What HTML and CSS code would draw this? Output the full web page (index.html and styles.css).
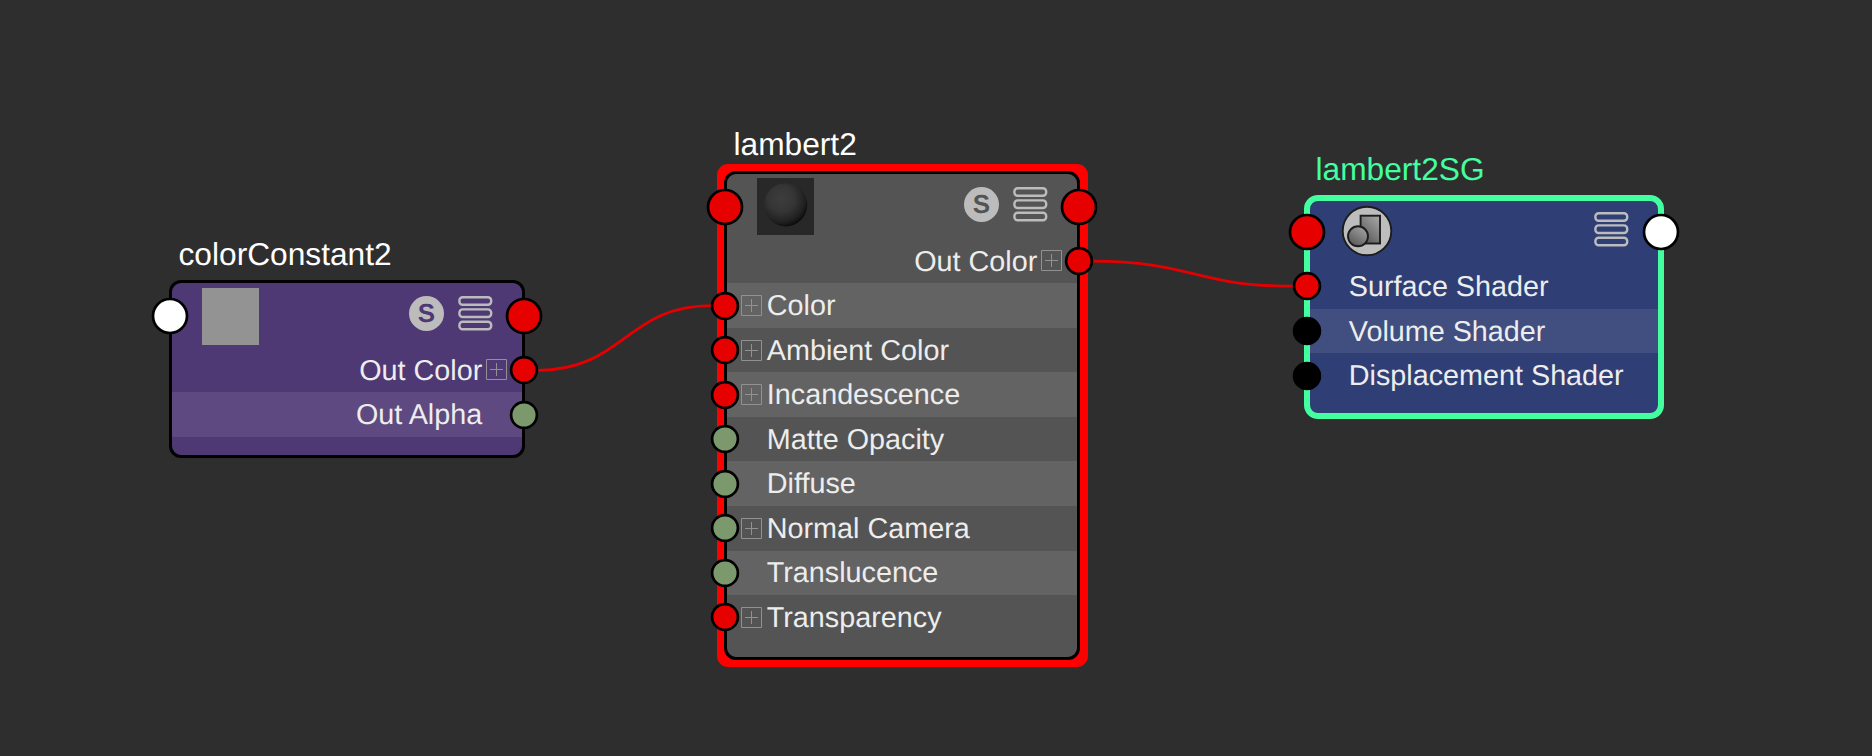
FILE: index.html
```
<!DOCTYPE html>
<html lang="en">
<head>
<meta charset="utf-8">
<title>Node Editor</title>
<link rel="stylesheet" href="styles.css">
</head>
<body>
<svg class="defs" width="0" height="0" aria-hidden="true">
  <defs>
    <radialGradient id="ball" cx="0.4" cy="0.36" r="0.68">
      <stop offset="0" stop-color="#3d3d3d"/>
      <stop offset="0.45" stop-color="#353535"/>
      <stop offset="0.8" stop-color="#202020"/>
      <stop offset="1" stop-color="#080808"/>
    </radialGradient>
    <linearGradient id="metal" x1="0.9" y1="0" x2="0.2" y2="1">
      <stop offset="0" stop-color="#a8a8a8"/>
      <stop offset="1" stop-color="#555"/>
    </linearGradient>
    <symbol id="bars" viewBox="0 0 35 35">
      <g fill="none" stroke="#bcbcbc" stroke-width="2.4">
        <rect x="1.4" y="1.2" width="31.8" height="7.6" rx="3.3"/>
        <rect x="1.4" y="13.4" width="31.8" height="7.6" rx="3.3"/>
        <rect x="1.4" y="25.7" width="31.8" height="7.6" rx="3.3"/>
      </g>
    </symbol>
    <symbol id="plus" viewBox="0 0 21 21">
      <path d="M.5 .5h20v20H.5zM4 10.5h13M10.5 4v13" fill="none" stroke="currentColor"/>
    </symbol>
    <symbol id="port" viewBox="0 0 30 30">
      <circle cx="15" cy="15" r="12.9" fill="currentColor" stroke="#000" stroke-width="2.7"/>
    </symbol>
    <symbol id="port-big" viewBox="0 0 38 38">
      <circle cx="19" cy="19" r="17" fill="currentColor" stroke="#000" stroke-width="2.7"/>
    </symbol>
  </defs>
</svg>
<main class="canvas">
  <svg class="wires" width="1872" height="756">
    <path d="M524 370.3H537C625 370.3 625 305.6 712 305.6H725"/>
    <path d="M1079 261.2H1092C1193 261.2 1193 286.2 1294 286.2H1307"/>
  </svg>

  <section class="node constant">
    <h2 class="title">colorConstant2</h2>
    <div class="box">
      <header class="head">
        <svg class="port big left white"><use href="#port-big"/></svg>
        <span class="swatch flat"></span>
        <span class="solo">S</span>
        <svg class="bars"><use href="#bars"/></svg>
        <svg class="port big right red"><use href="#port-big"/></svg>
      </header>
      <div class="row out"><span>Out Color</span><svg class="plus"><use href="#plus"/></svg><svg class="port right red"><use href="#port"/></svg></div>
      <div class="row out alt"><span>Out Alpha</span><svg class="port right green"><use href="#port"/></svg></div>
    </div>
  </section>

  <section class="node material">
    <h2 class="title">lambert2</h2>
    <div class="box">
      <header class="head">
        <svg class="port big left red"><use href="#port-big"/></svg>
        <svg class="swatch" viewBox="0 0 57 57"><rect width="57" height="57" fill="#282828"/><circle cx="28.7" cy="26.8" r="21.6" fill="url(#ball)"/></svg>
        <span class="solo">S</span>
        <svg class="bars"><use href="#bars"/></svg>
        <svg class="port big right red"><use href="#port-big"/></svg>
      </header>
      <div class="row out"><span>Out Color</span><svg class="plus"><use href="#plus"/></svg><svg class="port right red"><use href="#port"/></svg></div>
      <div class="row alt"><svg class="port left red"><use href="#port"/></svg><svg class="plus"><use href="#plus"/></svg><span>Color</span></div>
      <div class="row"><svg class="port left red"><use href="#port"/></svg><svg class="plus"><use href="#plus"/></svg><span>Ambient Color</span></div>
      <div class="row alt"><svg class="port left red"><use href="#port"/></svg><svg class="plus"><use href="#plus"/></svg><span>Incandescence</span></div>
      <div class="row"><svg class="port left green"><use href="#port"/></svg><span>Matte Opacity</span></div>
      <div class="row alt"><svg class="port left green"><use href="#port"/></svg><span>Diffuse</span></div>
      <div class="row"><svg class="port left green"><use href="#port"/></svg><svg class="plus"><use href="#plus"/></svg><span>Normal Camera</span></div>
      <div class="row alt"><svg class="port left green"><use href="#port"/></svg><span>Translucence</span></div>
      <div class="row"><svg class="port left red"><use href="#port"/></svg><svg class="plus"><use href="#plus"/></svg><span>Transparency</span></div>
    </div>
  </section>

  <section class="node group">
    <h2 class="title">lambert2SG</h2>
    <div class="box">
      <header class="head">
        <svg class="port big left red"><use href="#port-big"/></svg>
        <svg class="emblem" viewBox="0 0 52 52">
          <g stroke="#1c1c1c" stroke-width="1.9">
            <circle cx="26" cy="26" r="24.3" fill="#bdbdbd"/>
            <rect x="19.6" y="10.7" width="19.4" height="27.8" fill="url(#metal)"/>
            <circle cx="17" cy="31.3" r="10" fill="url(#metal)"/>
          </g>
        </svg>
        <svg class="bars"><use href="#bars"/></svg>
        <svg class="port big right white"><use href="#port-big"/></svg>
      </header>
      <div class="row"><svg class="port left red"><use href="#port"/></svg><span>Surface Shader</span></div>
      <div class="row alt"><svg class="port left black"><use href="#port"/></svg><span>Volume Shader</span></div>
      <div class="row"><svg class="port left black"><use href="#port"/></svg><span>Displacement Shader</span></div>
    </div>
  </section>
</main>
</body>
</html>
```
FILE: styles.css
```
body {
  margin: 0;
  background: #2e2e2e;
  font-family: "Liberation Sans", Arial, sans-serif;
  text-rendering: geometricPrecision;
}

.defs { position: absolute; }

.canvas {
  position: relative;
  width: 1872px;
  height: 756px;
  overflow: hidden;
}

.wires {
  position: absolute;
  inset: 0;
  fill: none;
  stroke: #e40000;
  stroke-width: 2.8;
}

/* Nodes sit freely on the canvas; --edge is the frame thickness. */
.node {
  --edge: 3px;
  --half: 1.5px;
  position: absolute;
  width: 356px;
}
.constant { left: 169px; top: 234px; }
.material { left: 724px; top: 125px; }
.group { --edge: 6px; --half: 3px; left: 1304px; top: 149px; width: 360px; }

.title {
  margin: 0;
  padding-left: 9.5px;
  height: 46px;
  line-height: 40px;
  font-size: 31.7px;
  font-weight: 400;
  color: #fff;
  white-space: nowrap;
}
.material .title { line-height: 38px; }
.group .title { color: #43ff9f; padding-left: 11.5px; }

.box {
  box-sizing: border-box;
  border: var(--edge) solid #000;
  border-radius: 12px;
}
.constant .box { height: 178px; background: #4e3974; }
.material .box {
  position: relative;
  height: 489px;
  background: #545454;
}
/* Selection halo, squarer than the frame it surrounds. */
.material .box::before {
  content: "";
  position: absolute;
  z-index: -1;
  inset: -10px -10.6px -10px -10.3px;
  border-radius: 11px;
  background: #f00;
}
.group .box { height: 224px; background: #2f3f75; border-color: #43ff9f; border-radius: 14px; }

.head, .row {
  position: relative;
  display: flex;
  box-sizing: border-box;
}

.head {
  height: calc(66.2px - var(--half));
  padding: calc(6px - var(--half)) calc(30.7px - var(--half)) 0 calc(31.7px - var(--half));
}
.group .head { padding-right: 28.7px; }
.swatch { width: 57px; height: 57px; }
.material .swatch { margin-top: -0.5px; }
.swatch.flat { background: #939393; }

.solo {
  margin: 8px 14px 0 auto;
  width: 35px;
  height: 35px;
  border-radius: 50%;
  background: #bcbcbc;
  color: #4e3974;
  font-size: 26px;
  line-height: 35px;
  font-weight: 700;
  text-align: center;
}
.material .solo { color: #545454; }
.bars { margin-top: 8px; width: 35px; height: 35px; }
.emblem { margin-left: 2.5px; margin-top: 1.2px; width: 52px; height: 52px; }
.emblem + .bars { margin-left: auto; margin-top: 7.5px; }

.row {
  height: 44.55px;
  align-items: center;
  padding: 0 calc(41.3px - var(--half));
  font-size: 28.75px;
  line-height: 43px;
  color: #ededed;
  white-space: nowrap;
}
.row span { padding-top: 2.4px; }
.row.out { justify-content: flex-end; }
.group .row { padding-left: 38.8px; }
.plus { width: 21px; height: 21px; color: #919191; }
.row .plus { margin-left: -26px; margin-right: 5px; }
.row.out .plus { margin-left: 3.5px; margin-right: -24.5px; }

.constant .alt { background: #5e4a81; }
.material .alt { background: #636363; }
.group .alt { background: #404f80; }

/* Ports straddle the frame line. */
.port {
  position: absolute;
  top: 7.3px;
  width: 30px;
  height: 30px;
}
.port.left { left: calc(-15.4px - var(--half)); }
.port.right { right: calc(-15.2px - var(--half)); }
.port.big { top: calc(15.3px - var(--half)); width: 38px; height: 38px; }
.port.big.left { left: calc(-19.4px - var(--half)); }
.port.big.right { right: calc(-19.2px - var(--half)); }
.group .port.left { margin-left: 0.8px; }

.red { color: #e60000; }
.green { color: #7c996d; }
.white { color: #fff; }
.black { color: #000; }
```
